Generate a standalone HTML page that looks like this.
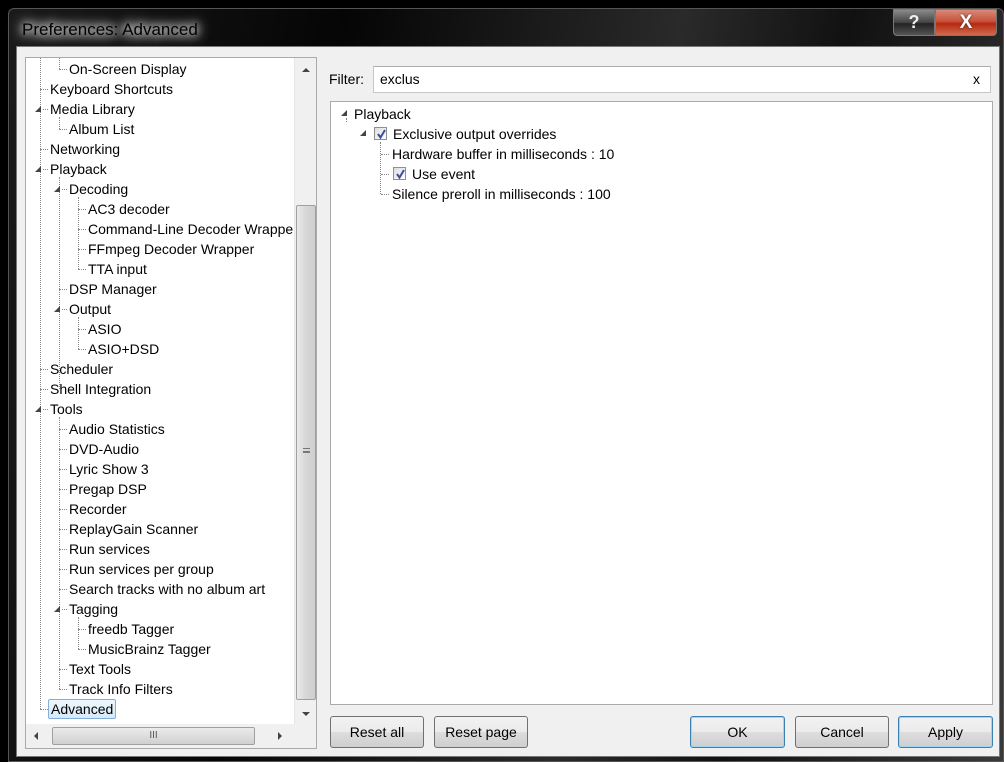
<!DOCTYPE html>
<html><head><meta charset="utf-8"><style>
*{margin:0;padding:0;box-sizing:border-box}
body{width:1004px;height:762px;background:#000;position:relative;overflow:hidden;font-family:"Liberation Sans",sans-serif;font-size:14px;color:#000}
.abs{position:absolute}
#frame{left:8px;top:8px;width:996px;height:754px;background:linear-gradient(100deg,#1a1a1a 0%,#050505 30%,#2a2a2a 60%,#111 75%,#3a3a3a 100%);border:1px solid #555;border-radius:6px 6px 0 0}
#title{left:18px;top:20px;color:#000;font-size:17px;text-shadow:0 0 8px #fff,0 0 12px #fff,0 0 16px #ddd;padding:0 4px}
#client{left:16px;top:46px;width:984px;height:711px;background:#f0f0f0;border:1px solid #777}
#tree{left:25px;top:57px;width:292px;height:692px;background:#fff;border:1px solid #aaa;overflow:hidden}
.it{position:absolute;white-space:nowrap;height:20px;line-height:20px}
.ex{position:absolute;width:0;height:0;border-left:6px solid transparent;border-bottom:6px solid #444}
.dl{position:absolute;border-top:1px dotted #888;width:8px}
.vl{position:absolute;border-left:1px dotted #888}
#vs{left:268px;top:0;width:23px;height:666px;background:#f0f0f0;border-left:1px solid #e6e6e6}
#thumb{left:1px;top:147px;width:20px;height:495px;background:linear-gradient(90deg,#eaeaea,#d6d6d6 50%,#cfcfcf);border:1px solid #a0a0a0;border-radius:2px}
#hs{left:0;top:666px;width:291px;height:24px;background:#f0f0f0}
#hthumb{left:26px;top:3px;width:203px;height:18px;background:linear-gradient(#ebebeb,#d0d0d0);border:1px solid #a0a0a0;border-radius:2px;text-align:center;font-size:10px;line-height:15px;color:#555}
.btn{position:absolute;top:716px;height:32px;border:1px solid #707070;border-radius:3px;background:linear-gradient(#f2f2f2 0%,#ebebeb 50%,#dddddd 51%,#cfcfcf 100%);text-align:center;line-height:30px;font-size:14px}
.def{border-color:#3c7fb1;box-shadow:inset 0 0 0 1px #9fd5f5}
#filter{left:373px;top:66px;width:618px;height:27px;background:#fff;border:1px solid #c6c6c6;border-top-color:#abadb3;padding-left:6px;line-height:25px}
#panel{left:330px;top:101px;width:663px;height:604px;background:#fff;border:1px solid #aaa}
.cb{position:absolute;width:13px;height:13px;border:1px solid #8f8f8f;background:linear-gradient(135deg,#ddd,#fff);}
.cb svg{position:absolute;left:0;top:0}
</style></head><body>
<div id="frame" class="abs"></div>
<div id="title" class="abs">Preferences: Advanced</div>
<div class="abs" style="left:893px;top:9px;width:42px;height:27px;background:linear-gradient(#8a8a8a,#444 50%,#222 55%,#555);border:1px solid #777;border-radius:0 0 0 4px;color:#eee;font-weight:bold;font-size:18px;text-align:center;line-height:25px">?</div>
<div class="abs" style="left:935px;top:9px;width:62px;height:27px;background:linear-gradient(#d98a7a,#c8523a 45%,#b52a10 55%,#d06a50);border:1px solid #777;border-radius:0 0 4px 0;color:#fff;font-weight:bold;font-size:19px;text-align:center;line-height:25px;text-shadow:0 0 2px #333">X</div>
<div id="client" class="abs"></div>

<div id="tree" class="abs">
<div style="position:absolute;left:0;top:-1px;width:268px;height:667px;overflow:hidden" id="tin">
<div class="vl" style="left:14px;top:0;height:652px"></div>
<div class="vl" style="left:33px;top:0;height:12px"></div>
<div class="vl" style="left:33px;top:60px;height:12px"></div>
<div class="vl" style="left:33px;top:120px;height:212px"></div>
<div class="vl" style="left:52px;top:140px;height:72px"></div>
<div class="vl" style="left:52px;top:260px;height:32px"></div>
<div class="vl" style="left:33px;top:360px;height:272px"></div>
<div class="vl" style="left:52px;top:560px;height:32px"></div>
</div>
<div id="vs" class="abs"><div style="position:absolute;left:7px;top:10px;border:4px solid transparent;border-bottom:4px solid #444;border-top:0"></div><div id="thumb" class="abs"><div style="position:absolute;left:6px;top:242px;width:7px;border-top:1px solid #777;height:5px;border-bottom:1px solid #777"></div><div style="position:absolute;left:6px;top:245px;width:7px;border-top:1px solid #777"></div></div><div style="position:absolute;left:7px;top:654px;border:4px solid transparent;border-top:4px solid #444;border-bottom:0"></div></div>
<div id="hs" class="abs"><div style="position:absolute;left:8px;top:8px;border:4px solid transparent;border-right:4px solid #444;border-left:0"></div><div id="hthumb" class="abs">III</div><div style="position:absolute;left:252px;top:8px;border:4px solid transparent;border-left:4px solid #444;border-right:0"></div></div>
</div>

<div class="abs" style="left:329px;top:71px">Filter:</div>
<div id="filter" class="abs">exclus<span style="position:absolute;right:10px;top:0">x</span></div>
<div id="panel" class="abs">
<div class="ex" style="left:10px;top:8px"></div><div class="it" style="left:23px;top:2px">Playback</div>
<div class="vl" style="left:15px;top:16px;height:4px"></div>
<div class="ex" style="left:29px;top:28px"></div>
<div class="cb" style="left:43px;top:25px"><svg width="13" height="13"><path d="M3 6 L5.5 9.5 L10 2" stroke="#3a4fa0" stroke-width="2" fill="none"/></svg></div>
<div class="it" style="left:62px;top:22px">Exclusive output overrides</div>
<div class="vl" style="left:49px;top:40px;height:52px"></div>
<div class="dl" style="left:50px;top:52px"></div><div class="it" style="left:61px;top:42px">Hardware buffer in milliseconds : 10</div>
<div class="dl" style="left:50px;top:72px"></div>
<div class="cb" style="left:62px;top:65px"><svg width="13" height="13"><path d="M3 6 L5.5 9.5 L10 2" stroke="#3a4fa0" stroke-width="2" fill="none"/></svg></div>
<div class="it" style="left:81px;top:62px">Use event</div>
<div class="dl" style="left:50px;top:92px"></div><div class="it" style="left:61px;top:82px">Silence preroll in milliseconds : 100</div>
</div>

<div class="btn" style="left:330px;width:94px">Reset all</div>
<div class="btn" style="left:434px;width:94px">Reset page</div>
<div class="btn def" style="left:690px;width:95px">OK</div>
<div class="btn" style="left:795px;width:94px">Cancel</div>
<div class="btn def" style="left:898px;width:95px">Apply</div>

<script>
var items=[[1,"On-Screen Display"],[0,"Keyboard Shortcuts"],[0,"Media Library",1],[1,"Album List"],[0,"Networking"],[0,"Playback",1],[1,"Decoding",1],[2,"AC3 decoder"],[2,"Command-Line Decoder Wrapper"],[2,"FFmpeg Decoder Wrapper"],[2,"TTA input"],[1,"DSP Manager"],[1,"Output",1],[2,"ASIO"],[2,"ASIO+DSD"],[0,"Scheduler"],[0,"Shell Integration"],[0,"Tools",1],[1,"Audio Statistics"],[1,"DVD-Audio"],[1,"Lyric Show 3"],[1,"Pregap DSP"],[1,"Recorder"],[1,"ReplayGain Scanner"],[1,"Run services"],[1,"Run services per group"],[1,"Search tracks with no album art"],[1,"Tagging",1],[2,"freedb Tagger"],[2,"MusicBrainz Tagger"],[1,"Text Tools"],[1,"Track Info Filters"],[0,"Advanced"]];
var t=document.getElementById('tin'),h='';
items.forEach(function(it,i){var top=2+20*i,x=24+19*it[0];
if(it[2])h+='<div class="ex" style="left:'+(x-15)+'px;top:'+(top+7)+'px"></div><div class="dl" style="left:'+(x-7)+'px;width:5px;top:'+(top+10)+'px"></div>';
else h+='<div class="dl" style="left:'+(x-10)+'px;top:'+(top+10)+'px"></div>';
if(i==32)h+='<div class="it" style="left:'+(x-2)+'px;top:'+top+'px;padding:0 2px;background:linear-gradient(#eef6fd,#d5eaf9);border:1px solid #84acdd;border-radius:2px;line-height:18px">'+it[1]+'</div>';
else h+='<div class="it" style="left:'+x+'px;top:'+top+'px">'+it[1]+'</div>';});
t.innerHTML+=h;
</script>
</body></html>
